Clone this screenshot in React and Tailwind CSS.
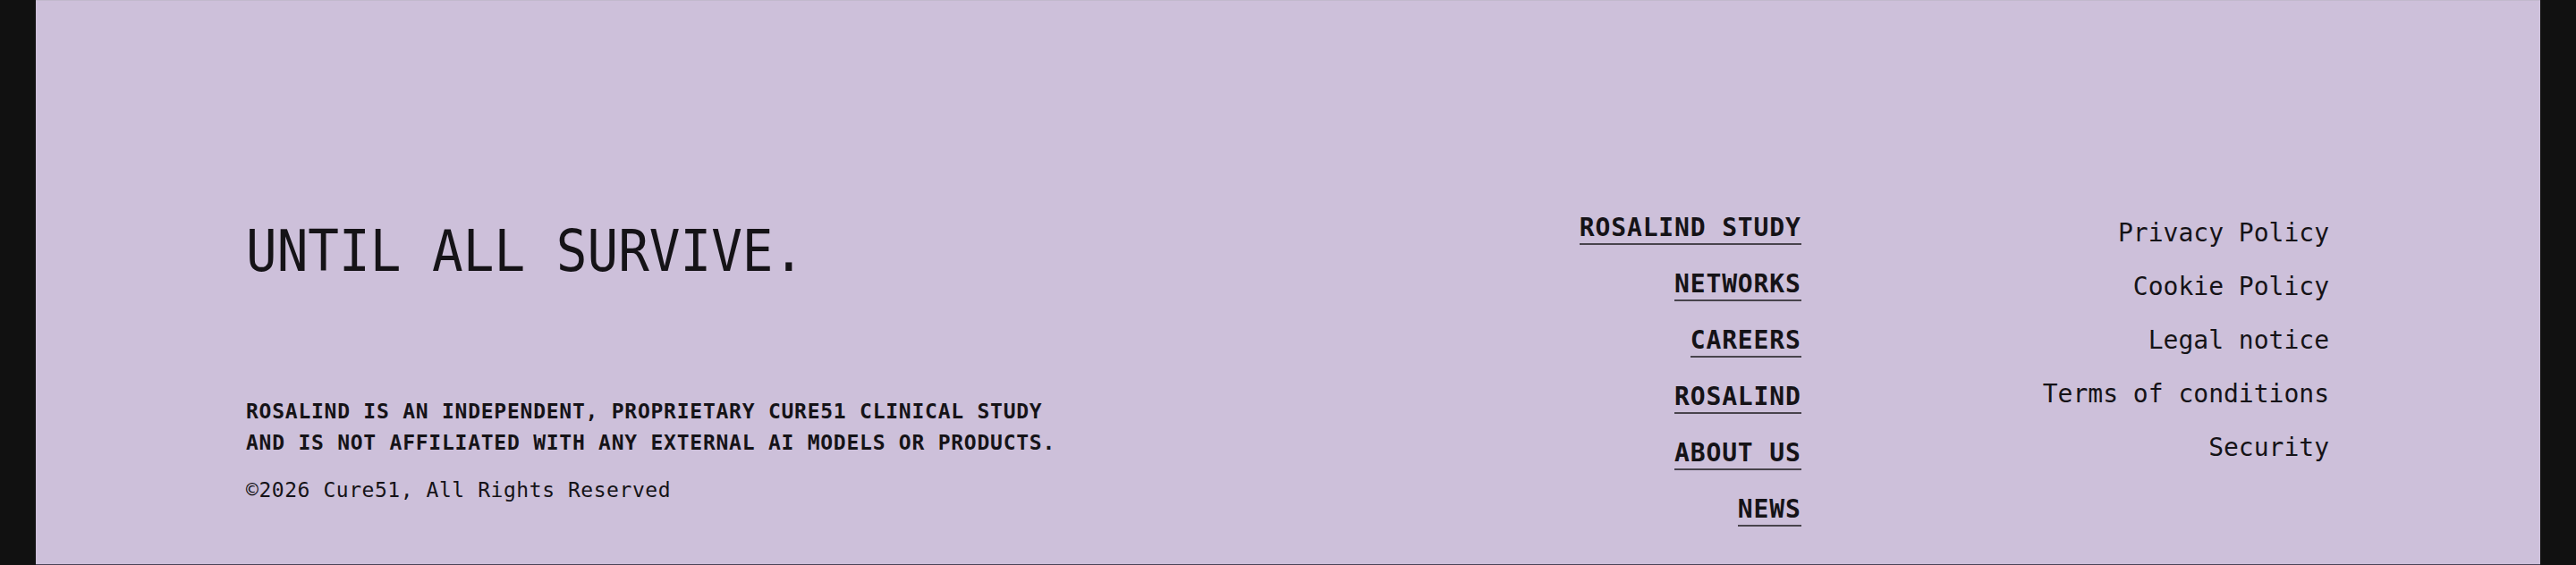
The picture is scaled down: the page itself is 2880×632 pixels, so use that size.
import React from 'react';

const mono = { fontFamily: '"DejaVu Sans Mono", "Liberation Mono", monospace' };

const studyLinks = ['ROSALIND STUDY', 'NETWORKS', 'CAREERS', 'ROSALIND', 'ABOUT US', 'NEWS'];
const legalLinks = ['Privacy Policy', 'Cookie Policy', 'Legal notice', 'Terms of conditions', 'Security'];

function App() {
  return (
    <div className="w-full h-[632px] bg-[#111111] px-[40px]" style={mono}>
      <footer className="h-full bg-[#cdc0da] border-t border-[#c2b9cd] border-b border-b-[#4a4458] text-[#151317] flex items-start pl-[235px] pr-[236px] pt-[236px]">
        {/* Left: slogan + disclaimer */}
        <div className="flex-1 flex flex-col mt-[12px]">
          <h2 className="text-[64px] leading-[64px] font-normal whitespace-nowrap origin-left scale-x-[0.9]">
            UNTIL ALL SURVIVE.
          </h2>
          <p className="mt-[130px] text-[23px] leading-[35px] font-bold tracking-[0.75px] whitespace-nowrap">
            ROSALIND IS AN INDEPENDENT, PROPRIETARY CURE51 CLINICAL STUDY
            <br />
            AND IS NOT AFFILIATED WITH ANY EXTERNAL AI MODELS OR PRODUCTS.
          </p>
          <p className="mt-[18px] text-[23px] leading-[35px] tracking-[0.55px] whitespace-nowrap">
            ©2026 Cure51, All Rights Reserved
          </p>
        </div>

        {/* Study nav */}
        <nav className="flex flex-col items-end gap-[26px]">
          {studyLinks.map((l) => (
            <a
              key={l}
              href="#"
              className="inline-block text-[28px] leading-[35px] font-bold tracking-[0.85px] border-b-2 border-[#48444c] whitespace-nowrap"
            >
              {l}
            </a>
          ))}
        </nav>

        {/* Legal */}
        <div className="ml-[270px] mt-[8px] flex flex-col items-end gap-[28px]">
          {legalLinks.map((l) => (
            <a key={l} href="#" className="text-[28px] leading-[32px] whitespace-nowrap">
              {l}
            </a>
          ))}
        </div>
      </footer>
    </div>
  );
}

export default App;
